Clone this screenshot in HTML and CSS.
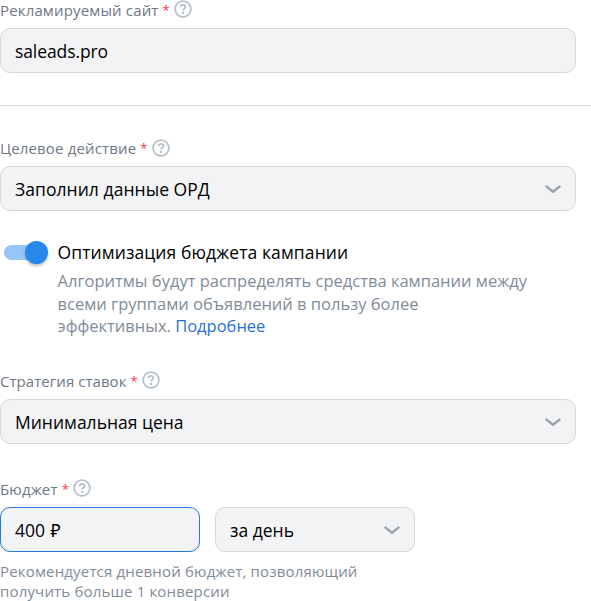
FILE: index.html
```
<!DOCTYPE html>
<html lang="ru">
<head>
  <meta charset="UTF-8">
  <title>Настройки кампании</title>
  <link rel="stylesheet" href="styles.css">
</head>
<body>
  <svg class="sprite" width="0" height="0">
    <symbol id="help" viewBox="0 0 18 18">
      <circle cx="9" cy="9" r="7.9" fill="none" stroke="#b8c1cc" stroke-width="1.8"/>
      <path d="M6.6 7.2C6.6 5.7 7.6 4.9 9 4.9s2.4.8 2.4 2.1c0 1.7-2.3 1.7-2.3 3.5" fill="none" stroke="#b8c1cc" stroke-width="1.9"/>
      <circle cx="9.1" cy="12.9" r="1.2" fill="#b8c1cc"/>
    </symbol>
    <symbol id="arrow" viewBox="0 0 16 10">
      <path d="M1.5 2.6L8 7.8l6.500-5.200" fill="none" stroke="#99a2ad" stroke-width="2.4" stroke-linecap="round" stroke-linejoin="round"/>
    </symbol>
  </svg>

  <div class="group">
    <div class="label"><span class="label-site">Рекламируемый сайт</span> <span class="required">*</span><svg class="help"><use href="#help"/></svg></div>
    <div class="field"><span class="value-site">saleads.pro</span></div>
  </div>

  <hr class="divider">

  <div class="group">
    <div class="label"><span class="label-action">Целевое действие</span> <span class="required">*</span><svg class="help low"><use href="#help"/></svg></div>
    <div class="field"><span class="value-action">Заполнил данные ОРД</span><svg class="arrow"><use href="#arrow"/></svg></div>
  </div>

  <div class="switch-row">
    <div class="switch"><div class="thumb"></div></div>
    <div class="switch-text">
      <div class="title">Оптимизация бюджета кампании</div>
      <div class="desc">Алгоритмы будут распределять средства кампании между<br>всеми группами объявлений в пользу более<br>эффективных. <a href="#" class="link">Подробнее</a></div>
    </div>
  </div>

  <div class="group">
    <div class="label"><span class="label-bid">Стратегия ставок</span> <span class="required">*</span><svg class="help"><use href="#help"/></svg></div>
    <div class="field"><span class="value-bid">Минимальная цена</span><svg class="arrow"><use href="#arrow"/></svg></div>
  </div>

  <div class="group budget">
    <div class="label"><span class="label-budget">Бюджет</span> <span class="required">*</span><svg class="help"><use href="#help"/></svg></div>
    <div class="fields">
      <div class="field small active"><span class="value-budget">400 ₽</span></div>
      <div class="field small"><span class="value-period">за день</span><svg class="arrow"><use href="#arrow"/></svg></div>
    </div>
    <div class="hint">Рекомендуется дневной бюджет, позволяющий<br>получить больше 1 конверсии</div>
  </div>
</body>
</html>
```
FILE: styles.css
```
* {
  box-sizing: border-box;
}

body {
  margin: 0;
  height: 601px;
  overflow: hidden;
  background: #fff;
  color: #000;
  font-family: "Open Sans", "Noto Sans", sans-serif;
  font-size: 17.5px;
}

.sprite {
  display: block;
}

.label {
  display: flex;
  align-items: center;
  height: 20px;
  margin-bottom: 8px;
  color: #6d7885;
  font-size: 15px;
  letter-spacing: 0.15px;
  white-space: nowrap;
}

.label-bid {
  letter-spacing: 0.05px;
}

.required {
  margin-left: 4px;
  color: #ff3347;
  font-size: 13px;
}

.help {
  width: 18px;
  height: 18px;
  margin-left: 4px;
  margin-top: -2px;
}

.low {
  margin-top: 0;
}

.field {
  display: flex;
  align-items: center;
  justify-content: space-between;
  width: 576px;
  height: 45px;
  padding: 0 14px;
  background: #f2f3f5;
  border: 1px solid #d5d6d8;
  border-radius: 10px;
  white-space: nowrap;
}

.value-site {
  letter-spacing: -0.1px;
}

.value-action {
  letter-spacing: 0.05px;
}

.value-budget {
  word-spacing: 1px;
}

.arrow {
  width: 16px;
  height: 10px;
}

.divider {
  height: 1px;
  margin: 32px 0;
  border: 0;
  background: #dcdde0;
}

.switch-row {
  display: flex;
  height: 97px;
  margin: 30px 0 33px;
}

.switch {
  width: 44px;
  height: 15px;
  margin: 4px 9.5px 0 4px;
  border-radius: 8px;
  background: #97c5f7;
}

.thumb {
  width: 23px;
  height: 23px;
  margin: -4px 0 0 21px;
  border-radius: 50%;
  background: #2688eb;
  box-shadow: 0 2px 3px rgba(0, 0, 0, 0.25);
}

.title {
  height: 29px;
  line-height: 23px;
  letter-spacing: 0.1px;
  white-space: nowrap;
}

.desc {
  color: #818c99;
  font-size: 16.5px;
  line-height: 22.5px;
  white-space: nowrap;
}

.link {
  color: #2a6fdb;
  text-decoration: none;
}

.budget {
  margin-top: 35px;
}

.fields {
  display: flex;
  gap: 15px;
}

.small {
  width: 200px;
}

.active {
  border-color: #2678d0;
}

.hint {
  margin-top: 9px;
  color: #818c99;
  font-size: 15px;
  letter-spacing: 0.17px;
  line-height: 20px;
  white-space: nowrap;
}
```
